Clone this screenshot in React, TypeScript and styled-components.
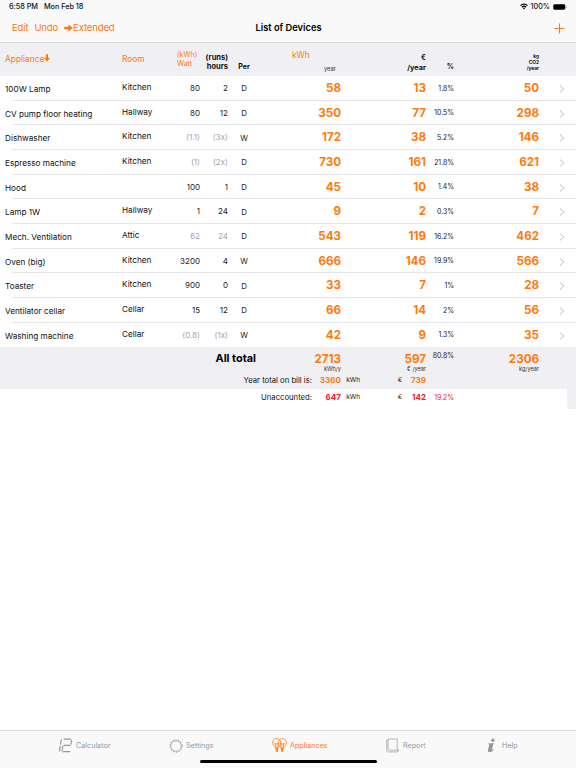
import { ReactNode } from "react";
import styled, { createGlobalStyle } from "styled-components";

const GlobalStyle = createGlobalStyle`
  * {
    box-sizing: border-box;
  }

  body {
    margin: 0;
    background-color: #fff;
    color: #111;
    font-family: Inter, "Liberation Sans", sans-serif;
    font-size: 8.5px;
    line-height: 1.2;
  }
`;

const ORANGE = "#ff7a0d";
const GRAY = "#a5a5a8";

const Screen = styled.div`
  display: flex;
  flex-direction: column;
  height: 768px;
  overflow: hidden;
  white-space: nowrap;
`;

const Header = styled.header`
  height: 43px;
  background-color: #f9f9f9;
  border-bottom: 1px solid #d9d9dc;
`;

const StatusBar = styled.div`
  display: flex;
  align-items: center;
  height: 14px;
  padding: 0 9px;
  font-size: 7.2px;
  font-weight: 500;

  .date {
    margin-left: 6px;
  }

  .battery {
    display: flex;
    align-items: center;
    gap: 3px;
    margin-left: auto;
  }
`;

const Clock = styled.div`
  letter-spacing: -0.04px;
  font-size: 7.3px;
`;

const NavBar = styled.nav`
  display: grid;
  grid-template-columns: 1fr auto 1fr;
  align-items: center;
  height: 28px;
  padding: 0 11px 0 12px;
  color: ${ORANGE};
  font-size: 9.6px;

  .actions {
    display: flex;
    align-items: center;
    gap: 6px;
    letter-spacing: -0.18px;
  }

  .actions span {
    display: flex;
    align-items: center;
  }

  .add {
    justify-self: end;
  }
`;

const Title = styled.h1`
  margin: 0;
  color: #000;
  font-size: 9.3px;
  font-weight: 600;
`;

const Columns = styled.div`
  display: grid;
  grid-template-columns: 117px 43px 35px 28px 32px 81px 85px 28px 85px 37px;
  padding-left: 5px;
`;

const TableHead = styled(Columns)`
  height: 33px;
  background-color: #efeff4;
`;

const HeadCell = styled.div<{
  $top: number;
  $left?: number;
  $size?: number;
  $bold?: boolean;
  $orange?: boolean;
  $align?: string;
  $line?: number;
}>`
  padding-top: ${(p) => p.$top}px;
  padding-left: ${(p) => p.$left ?? 0}px;
  color: ${(p) => (p.$orange ? ORANGE : "#111")};
  font-size: ${(p) => p.$size ?? 8.4}px;
  font-weight: ${(p) => (p.$bold ? 700 : 400)};
  line-height: ${(p) => p.$line ?? 10}px;
  text-align: ${(p) => p.$align ?? "right"};
`;

const KwhHead = styled.div`
  display: flex;
  justify-content: space-between;
  padding: 7px 5px 0 32px;
  color: ${ORANGE};
  font-size: 8.4px;

  small {
    margin-top: 15px;
    color: #333;
    font-size: 5.8px;
    line-height: 7px;
  }
`;

const Row = styled(Columns)`
  height: 24.68px;
  padding-top: 1px;
  align-items: center;
  background: linear-gradient(#e6e6e9, #e6e6e9) 12px 100% / 100% 1px no-repeat;

  &:last-child {
    background: none;
  }
`;

const Name = styled.div`
  padding-top: 2px;
  font-size: 8.2px;
`;

const Room = styled.div`
  padding-bottom: 2px;
  font-size: 8.2px;
`;

const Num = styled.div<{ $muted?: boolean }>`
  color: ${(p) => (p.$muted ? GRAY : "#222")};
  font-size: 8px;
  text-align: right;
`;

const Per = styled.div`
  color: #222;
  font-size: 7.8px;
  text-align: center;
`;

const Big = styled.div`
  color: ${ORANGE};
  font-size: 11.6px;
  font-weight: 700;
  text-align: right;
`;

const Percent = styled.div<{ $red?: boolean }>`
  color: ${(p) => (p.$red ? "#f0142d" : "#222")};
  font-size: 6.9px;
  text-align: right;
`;

const TotalPercent = styled(Percent)`
  padding-top: 5px;
`;

const Chevron = styled.div`
  display: flex;
  justify-content: flex-end;
  padding-right: 11px;
`;

const Totals = styled.section`
  height: 42px;
  background-color: #efeff4;
`;

const TotalRow = styled.div<{ $height: number }>`
  display: grid;
  grid-template-columns: 256px 85px 85px 28px 85px 37px;
  height: ${(p) => p.$height}px;
  align-items: start;
`;

const TotalLabel = styled.div`
  padding-top: 5px;
  color: #000;
  font-size: 10.9px;
  font-weight: 700;
  text-align: right;
`;

const TotalValue = styled.div`
  padding-top: 5px;
  color: ${ORANGE};
  font-size: 11.6px;
  font-weight: 700;
  line-height: 14px;
  text-align: right;

  small {
    display: block;
    color: #333;
    font-size: 5.6px;
    font-weight: 400;
    line-height: 7px;
  }
`;

const BillRow = styled.div<{ $height: number; $red?: boolean }>`
  display: grid;
  grid-template-columns: 312px 29px 19px 42px 24px 28px 1fr;
  height: ${(p) => p.$height}px;
  align-items: center;
  text-align: right;

  span {
    font-size: 7.7px;
  }

  small {
    padding-top: 1px;
    color: #222;
    font-size: 6.5px;
  }

  strong {
    color: ${(p) => (p.$red ? "#f0142d" : ORANGE)};
    font-size: 8.1px;
  }
`;

const Unaccounted = styled.section`
  display: flex;
  height: 20px;

  > div:first-child {
    width: 567px;
  }
`;

const SideStrip = styled.div`
  flex: 1;
  background-color: #efeff4;
`;

const TabBar = styled.footer`
  height: 38px;
  margin-top: auto;
  background-color: #f9f9f9;
  border-top: 1px solid #e0e0e2;
`;

const Tabs = styled.div`
  display: flex;
  height: 29px;
  padding-left: 58px;
`;

const Tab = styled.div<{ $width: number; $gap: number; $active?: boolean }>`
  display: flex;
  align-items: center;
  gap: ${(p) => p.$gap}px;
  width: ${(p) => p.$width}px;
  color: ${(p) => (p.$active ? ORANGE : "#98989a")};
  font-size: 7.2px;

  span {
    padding-top: 1px;
  }
`;

const HomeIndicator = styled.div`
  width: 177px;
  height: 3px;
  margin: 0 auto;
  border-radius: 2px;
  background-color: #000;
`;

interface Device {
  name: string;
  room: string;
  watt: string;
  hours: string;
  per: string;
  kwh: number;
  euro: number;
  percent: string;
  co2: number;
  muted?: boolean;
}

const devices: Device[] = [
  { name: "100W Lamp", room: "Kitchen", watt: "80", hours: "2", per: "D", kwh: 58, euro: 13, percent: "1.8%", co2: 50 },
  { name: "CV pump floor heating", room: "Hallway", watt: "80", hours: "12", per: "D", kwh: 350, euro: 77, percent: "10.5%", co2: 298 },
  { name: "Dishwasher", room: "Kitchen", watt: "(1.1)", hours: "(3x)", per: "W", kwh: 172, euro: 38, percent: "5.2%", co2: 146, muted: true },
  { name: "Espresso machine", room: "Kitchen", watt: "(1)", hours: "(2x)", per: "D", kwh: 730, euro: 161, percent: "21.8%", co2: 621, muted: true },
  { name: "Hood", room: "", watt: "100", hours: "1", per: "D", kwh: 45, euro: 10, percent: "1.4%", co2: 38 },
  { name: "Lamp 1W", room: "Hallway", watt: "1", hours: "24", per: "D", kwh: 9, euro: 2, percent: "0.3%", co2: 7 },
  { name: "Mech. Ventilation", room: "Attic", watt: "62", hours: "24", per: "D", kwh: 543, euro: 119, percent: "16.2%", co2: 462, muted: true },
  { name: "Oven (big)", room: "Kitchen", watt: "3200", hours: "4", per: "W", kwh: 666, euro: 146, percent: "19.9%", co2: 566 },
  { name: "Toaster", room: "Kitchen", watt: "900", hours: "0", per: "D", kwh: 33, euro: 7, percent: "1%", co2: 28 },
  { name: "Ventilator cellar", room: "Cellar", watt: "15", hours: "12", per: "D", kwh: 66, euro: 14, percent: "2%", co2: 56 },
  { name: "Washing machine", room: "Cellar", watt: "(0.8)", hours: "(1x)", per: "W", kwh: 42, euro: 9, percent: "1.3%", co2: 35, muted: true },
];

const CalculatorIcon = () => (
  <svg width="15" height="15" viewBox="0 0 15 15" fill="none" stroke="currentColor" strokeWidth="1.2">
    <path d="M3.3 1.5 2.5 6.7M2.2 8 1.4 13.3M5.7 1.2h7.2M13.6 1.8l-.7 4.8M5.5 7.3h6.8M4.8 8l-.7 5M4.5 13.7h7.6" />
  </svg>
);

const SettingsIcon = () => (
  <svg width="14" height="14" viewBox="0 0 14 14" fill="none" stroke="currentColor">
    <circle cx="7" cy="7" r="5.3" strokeWidth=".7" />
    <circle cx="7" cy="7" r="6.1" strokeWidth="1.1" strokeDasharray="1.1 1.64" />
  </svg>
);

const BulbsIcon = () => (
  <svg width="15" height="15" viewBox="0 0 15 15" fill="none" stroke="currentColor" strokeWidth=".8">
    <path d="M3.6 10C3.3 8.2.6 7.5.6 4.8A4.2 4.2 0 0 1 9 4.8C9 7.5 6.4 8.2 6.1 10Z" />
    <path d="M8.9 10C8.6 8.2 6 7.5 6 4.8A4.2 4.2 0 0 1 14.4 4.8C14.4 7.5 11.7 8.2 11.4 10Z" />
    <path d="M4.2 9.5 3 5l1.8 1.3L6.6 5 5.6 9.5M9.5 9.5 8.4 5l1.8 1.3L12 5l-1.2 4.5" />
    <path d="M3.5 11.2h2.8M8.8 11.2h2.8M3.8 13h2.3M9 13h2.3" strokeWidth="1.7" />
  </svg>
);

const ReportIcon = () => (
  <svg width="14" height="15" viewBox="0 0 14 15" fill="none" stroke="currentColor" strokeWidth=".7">
    <path d="M2 1h9.2v9.5c0 1.2.5 1.6 1.8 1.7H4.4C2.6 12.2 2 11.6 2 10Z" />
    <path d="M1.9 2H.7v10.3c0 1.1.5 1.6 1.6 1.6h8.4c1 0 1.6-.5 1.6-1.7" />
  </svg>
);

const InfoIcon = () => (
  <svg width="9" height="15" viewBox="0 0 9 15" fill="currentColor">
    <circle cx="5.9" cy="2.3" r="1.7" />
    <path d="M1.2 5.5 6.7 4.9 4.9 11.5c-.2.8.2.9 1.5-.7l.6.4C5.3 13.6 4 14.1 2.7 14c-1.5 0-2.1-.8-1.7-2.3L2.2 7.2c.2-.7 0-.9-1.2-.9Z" />
  </svg>
);

const ArrowIcon = ({ down }: { down?: boolean }) =>
  down ? (
    <svg width="6" height="8" viewBox="0 0 6 8" fill={ORANGE}>
      <path d="M1.9.3h2.2v3.6h1.8L3 7.7.1 3.9h1.8Z" />
    </svg>
  ) : (
    <svg width="9" height="8" viewBox="0 0 9 8" fill={ORANGE}>
      <path d="M.2 2.7h4.3V.5L8.9 4 4.5 7.5V5.3H.2Z" />
    </svg>
  );

const tabs: { label: string; icon: ReactNode; width: number; gap: number; active?: boolean }[] = [
  { label: "Calculator", icon: <CalculatorIcon />, width: 111, gap: 3 },
  { label: "Settings", icon: <SettingsIcon />, width: 103, gap: 3 },
  { label: "Appliances", icon: <BulbsIcon />, width: 114, gap: 3, active: true },
  { label: "Report", icon: <ReportIcon />, width: 101, gap: 3 },
  { label: "Help", icon: <InfoIcon />, width: 60, gap: 6 },
];

const App = () => (
  <Screen>
    <GlobalStyle />
    <Header>
      <StatusBar>
        <Clock>6:58 PM</Clock>
        <Clock className="date">Mon Feb 18</Clock>
        <div className="battery">
          <svg width="8" height="7" viewBox="0 0 8 7" fill="none" stroke="#000" strokeWidth="1.2">
            <path d="M.5 2.6a5 5 0 0 1 7 0M1.9 4.2a3 3 0 0 1 4.2 0" />
            <path d="M2.9 5.1 4 6.4l1.1-1.3a1.5 1.5 0 0 0-2.2 0Z" fill="#000" stroke="none" />
          </svg>
          <span>100%</span>
          <svg width="14" height="6" viewBox="0 0 14 6">
            <rect x=".3" y=".3" width="12" height="5.4" rx="1.4" fill="#000" />
            <path d="M13 2v2c.8-.3.8-1.7 0-2Z" fill="#777" />
          </svg>
        </div>
      </StatusBar>
      <NavBar>
        <div className="actions">
          <span>Edit</span>
          <span>Undo</span>
          <span>
            <ArrowIcon />
            Extended
          </span>
        </div>
        <Title>List of Devices</Title>
        <svg className="add" width="11" height="11" viewBox="0 0 11 11" stroke={ORANGE} strokeWidth="1">
          <path d="M5.5.5v10M.5 5.5h10" />
        </svg>
      </NavBar>
    </Header>

    <TableHead>
      <HeadCell $top={11} $orange $align="left">
        Appliance
        <ArrowIcon down />
      </HeadCell>
      <HeadCell $top={11} $orange $align="left">
        Room
      </HeadCell>
      <HeadCell $top={7} $left={12} $size={7.1} $line={9} $orange $align="left">
        (kWh)
        <br />
        Watt
      </HeadCell>
      <HeadCell $top={10} $size={7.5} $line={9} $bold>
        (runs)
        <br />
        hours
      </HeadCell>
      <HeadCell $top={19} $size={7.1} $line={9} $bold $align="center">
        Per
      </HeadCell>
      <KwhHead>
        kWh<small>year</small>
      </KwhHead>
      <HeadCell $top={10} $size={7.3} $bold>
        €<br />
        /year
      </HeadCell>
      <HeadCell $top={19} $size={7.1} $bold>
        %
      </HeadCell>
      <HeadCell $top={11} $size={4.8} $line={5.8} $bold>
        kg
        <br />
        CO2
        <br />
        /year
      </HeadCell>
    </TableHead>

    <div>
      {devices.map((d) => (
        <Row key={d.name}>
          <Name>{d.name}</Name>
          <Room>{d.room}</Room>
          <Num $muted={d.muted}>{d.watt}</Num>
          <Num $muted={d.muted}>{d.hours}</Num>
          <Per>{d.per}</Per>
          <Big>{d.kwh}</Big>
          <Big>{d.euro}</Big>
          <Percent>{d.percent}</Percent>
          <Big>{d.co2}</Big>
          <Chevron>
            <svg width="6" height="8" viewBox="0 0 6 8" fill="none" stroke="#bdbdc2" strokeWidth="1">
              <path d="M1 .6 4.8 4 1 7.4" />
            </svg>
          </Chevron>
        </Row>
      ))}
    </div>

    <Totals>
      <TotalRow $height={25.5}>
        <TotalLabel>All total</TotalLabel>
        <TotalValue>
          2713<small>kWh/y</small>
        </TotalValue>
        <TotalValue>
          597<small>€ /year</small>
        </TotalValue>
        <TotalPercent>80.8%</TotalPercent>
        <TotalValue>
          2306<small>kg/year</small>
        </TotalValue>
      </TotalRow>
      <BillRow $height={16}>
        <span>Year total on bill is:</span>
        <strong>3360</strong>
        <small>kWh</small>
        <small>€</small>
        <strong>739</strong>
      </BillRow>
    </Totals>
    <Unaccounted>
      <BillRow $height={17} $red>
        <span>Unaccounted:</span>
        <strong>647</strong>
        <small>kWh</small>
        <small>€</small>
        <strong>142</strong>
        <Percent $red>19.2%</Percent>
      </BillRow>
      <SideStrip />
    </Unaccounted>

    <TabBar>
      <Tabs>
        {tabs.map((t) => (
          <Tab key={t.label} $width={t.width} $gap={t.gap} $active={t.active}>
            {t.icon}
            <span>{t.label}</span>
          </Tab>
        ))}
      </Tabs>
      <HomeIndicator />
    </TabBar>
  </Screen>
);

export default App;
